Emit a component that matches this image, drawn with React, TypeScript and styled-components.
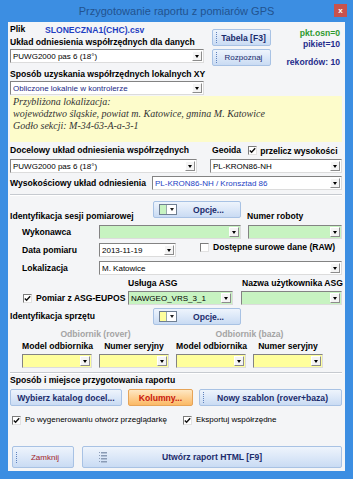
import React from 'react';
import styled, { createGlobalStyle } from 'styled-components';

const FONT = `"Liberation Sans", Arial, sans-serif`;

const GlobalStyle = createGlobalStyle`
  html, body {
    margin: 0;
    padding: 0;
  }
  body {
    width: 353px;
    height: 479px;
    overflow: hidden;
    background: #3c8ee2;
  }
  * {
    box-sizing: border-box;
  }
`;

const Window = styled.div`
  width: 353px;
  height: 479px;
  background: #3c8ee2;
  padding: 0 8px 8px;
  display: flex;
  flex-direction: column;
  font-family: ${FONT};
  font-size: 8px;
  color: #000;
`;

const TitleBar = styled.div`
  height: 22px;
  margin: 0 -8px;
  display: grid;
  grid-template-columns: 1fr auto 1fr;
  align-items: center;
`;

const Title = styled.div`
  grid-column: 2;
  font-size: 11px;
  color: #22538f;
  white-space: nowrap;
`;

const CloseButton = styled.div`
  grid-column: 3;
  justify-self: end;
  align-self: start;
  margin: 4px 6px 0 0;
  width: 13px;
  height: 13px;
  background: #c9524c;
  color: #fff;
  font-size: 8px;
  font-weight: bold;
  display: flex;
  align-items: center;
  justify-content: center;
`;

const Body = styled.div`
  flex: 1;
  background: #f4f5f7;
  padding: 0 3px 3px 2px;
  display: flex;
  flex-direction: column;
`;

const Label = styled.div<{ $h?: number; $color?: string }>`
  font-weight: bold;
  font-size: 8.6px;
  line-height: ${p => p.$h ?? 13}px;
  color: ${p => p.$color ?? '#000'};
  white-space: nowrap;
`;

/* ---------- combo box ---------- */

const ComboBox = styled.div<{ $bg?: string; $color?: string }>`
  height: 14px;
  display: flex;
  align-items: center;
  background: ${p => p.$bg ?? '#fff'};
  color: ${p => p.$color ?? '#000'};
  border: 1px solid;
  border-color: #838383 #dcdcdc #dcdcdc #838383;
  padding-left: 2px;
  font-size: 8px;
  min-width: 0;
`;

const ComboText = styled.span`
  flex: 1;
  overflow: hidden;
  white-space: nowrap;
`;

const DropArrow = styled.span`
  width: 10px;
  height: 10px;
  margin-right: 1px;
  background: #f4f4f4;
  border: 1px solid;
  border-color: #fff #8c8c8c #8c8c8c #fff;
  display: flex;
  align-items: center;
  justify-content: center;
  &::after {
    content: '';
    border-left: 2.5px solid transparent;
    border-right: 2.5px solid transparent;
    border-top: 3px solid #000;
  }
`;

const Combo = ({ text, bg, color }: { text?: string; bg?: string; color?: string }) => (
  <ComboBox $bg={bg} $color={color}>
    <ComboText>{text}</ComboText>
    <DropArrow />
  </ComboBox>
);

/* ---------- check box ---------- */

const CheckBox = styled.span`
  width: 9px;
  height: 9px;
  flex: none;
  background: #fff;
  border: 1px solid;
  border-color: #7c7c7c #e2e2e2 #e2e2e2 #7c7c7c;
  display: flex;
  align-items: center;
  justify-content: center;
`;

const Check = ({ checked }: { checked?: boolean }) => (
  <CheckBox>
    {checked && (
      <svg width="7" height="7" viewBox="0 0 7 7">
        <path d="M0.8 3.4 L2.6 5.3 L6.2 1.2" fill="none" stroke="#111" strokeWidth="1.4" />
      </svg>
    )}
  </CheckBox>
);

const CheckItem = styled.div<{ $gap?: number }>`
  display: flex;
  align-items: center;
  gap: ${p => p.$gap ?? 4}px;
  white-space: nowrap;
`;

const CheckText = styled.span<{ $bold?: boolean }>`
  font-size: ${p => (p.$bold ? 8.6 : 8)}px;
  font-weight: ${p => (p.$bold ? 'bold' : 'normal')};
`;

/* ---------- buttons ---------- */

const Button = styled.div<{ $orange?: boolean; $bold?: boolean; $color?: string; $h?: number }>`
  height: ${p => p.$h ?? 17}px;
  display: flex;
  align-items: center;
  border-radius: 2px;
  border: 1px solid ${p => (p.$orange ? '#e6a458' : '#a8c2e4')};
  background: ${p =>
    p.$orange
      ? 'linear-gradient(#fee8c4, #fdd093 50%, #fbb965)'
      : 'linear-gradient(#eef4fc, #dce8f8 50%, #c9dbf3)'};
  color: ${p => p.$color ?? '#1b2c6c'};
  font-weight: ${p => (p.$bold === false ? 'normal' : 'bold')};
  font-size: ${p => (p.$bold === false ? 8 : 8.6)}px;
  white-space: nowrap;
  overflow: hidden;
`;

const ButtonText = styled.span`
  flex: 1;
  text-align: center;
`;

const Grip = styled.span`
  width: 1px;
  height: 11px;
  margin-left: 3px;
  flex: none;
  background: repeating-linear-gradient(to bottom, #5f82bd 0 1px, transparent 1px 2px);
`;

const ColorCombo = styled.span`
  display: flex;
  margin-left: 5px;
  height: 11px;
  border: 1px solid #6f7f92;
  background: #fff;
`;

const ColorSwatch = styled.span<{ $color: string }>`
  width: 7px;
  background: ${p => p.$color};
  border-right: 1px solid #9aa;
`;

const ColorArrow = styled.span`
  width: 9px;
  display: flex;
  align-items: center;
  justify-content: center;
  &::after {
    content: '';
    border-left: 2.5px solid transparent;
    border-right: 2.5px solid transparent;
    border-top: 3px solid #222;
  }
`;

const OptionsButton = ({ color }: { color: string }) => (
  <Button>
    <ColorCombo>
      <ColorSwatch $color={color} />
      <ColorArrow />
    </ColorCombo>
    <ButtonText>Opcje...</ButtonText>
  </Button>
);

/* ---------- top area ---------- */

const TopGrid = styled.div`
  display: grid;
  grid-template-columns: 194px 59px 1fr;
  column-gap: 8px;
`;

const Stack = styled.div`
  display: flex;
  flex-direction: column;
`;

const FileRow = styled.div`
  margin-top: 1px;
  height: 13px;
  display: flex;
  align-items: center;
`;

const FileLabel = styled(Label)`
  width: 35px;
`;

const FileName = styled.span`
  font-weight: bold;
  font-size: 8.6px;
  color: #1f3fc2;
`;

const SecondLabel = styled(Label)`
  margin-top: 4px;
`;

const ButtonStack = styled.div`
  padding-top: 7px;
  display: flex;
  flex-direction: column;
  gap: 3px;
`;

const Stats = styled.div`
  display: flex;
  flex-direction: column;
  align-items: flex-end;
  padding: 6px 2px 0 0;
`;

const Stat = styled.div<{ $color: string; $gap?: number }>`
  font-weight: bold;
  font-size: 8.6px;
  line-height: 11px;
  color: ${p => p.$color};
  margin-top: ${p => p.$gap ?? 0}px;
`;

const InfoBox = styled.div`
  margin-top: 1px;
  height: 46px;
  background: #fdfccb;
  padding: 0 3px;
  font-family: "Liberation Serif", "Times New Roman", serif;
  font-style: italic;
  font-size: 10px;
  line-height: 12px;
  color: #333;
`;

/* ---------- target system ---------- */

const TargetGrid = styled.div`
  margin-top: 2px;
  display: grid;
  grid-template-columns: 187px 1fr;
  column-gap: 13px;
  row-gap: 2px;
`;

const GeoidHeader = styled.div`
  display: flex;
  align-items: center;
  padding-left: 2px;
  gap: 7px;
`;

const HeightRow = styled.div`
  margin-top: 3px;
  display: grid;
  grid-template-columns: 142px 1fr;
  align-items: center;
`;

const Separator = styled.div`
  margin-top: 4px;
  height: 2px;
  border-top: 1px solid #c6cad0;
  border-bottom: 1px solid #fff;
`;

/* ---------- session ---------- */

const SectionHeader = styled.div`
  height: 26px;
  display: grid;
  grid-template-columns: 143px 88px 1fr;
  align-items: end;
`;

const HeaderButtonCell = styled.div`
  align-self: start;
  margin-top: 5px;
`;

const SideLabel = styled(Label)`
  padding-left: 6px;
`;

const SessionGrid = styled.div`
  margin-top: 3px;
  padding-left: 12px;
  display: grid;
  grid-template-columns: 77px 1fr;
  row-gap: 4px;
  align-items: center;
`;

const PerformerCell = styled.div`
  display: grid;
  grid-template-columns: 142px 1fr;
  column-gap: 7px;
`;

const DateCell = styled.div`
  display: grid;
  grid-template-columns: 77px 1fr;
  column-gap: 24px;
  align-items: center;
`;

const RawCheck = styled(CheckItem)`
  align-self: start;
  margin-top: -1px;
`;

const AsgGrid = styled.div<{ $mt: number }>`
  margin-top: ${p => p.$mt}px;
  display: grid;
  grid-template-columns: 110px 105px 1fr;
  column-gap: 8px;
  align-items: center;
`;

const AsgUserLabel = styled(Label)`
  padding-left: 1px;
`;

const AsgCheck = styled(CheckItem)`
  padding-left: 13px;
`;

const EquipmentRow = styled.div`
  margin-top: 3px;
  display: grid;
  grid-template-columns: 143px 88px;
  align-items: center;
`;

const ReceiverGrid = styled.div`
  margin-top: 3px;
  padding-left: 12px;
  display: grid;
  grid-template-columns: repeat(4, 70px);
  column-gap: 7px;
`;

const GroupTitle = styled(Label)`
  grid-column: span 2;
  text-align: center;
`;

const ColumnTitle = styled(Label)`
  text-align: center;
`;

const ReceiverCombo = styled.div`
  margin-top: 2px;
`;

/* ---------- report ---------- */

const ReportButtons = styled.div`
  margin-top: 3px;
  display: grid;
  grid-template-columns: 112px 65px 1fr;
  column-gap: 6px;
`;

const OptionsRow = styled.div`
  margin-top: 8px;
  padding-left: 2px;
  display: grid;
  grid-template-columns: 171px 1fr;
  line-height: 12px;
`;

const BottomButtons = styled.div`
  margin-top: auto;
  padding-left: 2px;
  display: grid;
  grid-template-columns: 62px 1fr;
  column-gap: 8px;
`;

const CreateButton = styled(Button)`
  display: grid;
  grid-template-columns: 1fr auto 1fr;
`;

const CreateIcon = styled.svg`
  margin-left: 16px;
`;

const GREEN = '#c7f3c1';
const YELLOW = '#ffff9c';

export default function App() {
  return (
    <>
      <GlobalStyle />
      <Window>
        <TitleBar>
          <Title>Przygotowanie raportu z pomiarów GPS</Title>
          <CloseButton>x</CloseButton>
        </TitleBar>
        <Body>
          <TopGrid>
            <Stack>
              <FileRow>
                <FileLabel>Plik</FileLabel>
                <FileName>SLONECZNA1(CHC).csv</FileName>
              </FileRow>
              <Label>Układ odniesienia współrzędnych dla danych</Label>
              <Combo text="PUWG2000 pas 6 (18°)" />
              <SecondLabel $h={14}>Sposób uzyskania współrzędnych lokalnych XY</SecondLabel>
              <Combo text="Obliczone lokalnie w kontrolerze" color="#1c2a86" />
            </Stack>
            <ButtonStack>
              <Button>
                <Grip />
                <ButtonText>Tabela [F3]</ButtonText>
              </Button>
              <Button $bold={false}>
                <Grip />
                <ButtonText>Rozpoznaj</ButtonText>
              </Button>
            </ButtonStack>
            <Stats>
              <Stat $color="#2f9a2f">pkt.osn=0</Stat>
              <Stat $color="#1f2c8c">pikiet=10</Stat>
              <Stat $color="#1f2c8c" $gap={7}>rekordów: 10</Stat>
            </Stats>
          </TopGrid>

          <InfoBox>
            Przybliżona lokalizacja:
            <br />
            województwo śląskie, powiat m. Katowice, gmina M. Katowice
            <br />
            Godło sekcji: M-34-63-A-a-3-1
          </InfoBox>

          <TargetGrid>
            <Label>Docelowy układ odniesienia współrzędnych</Label>
            <GeoidHeader>
              <Label>Geoida</Label>
              <CheckItem $gap={3}>
                <Check checked />
                <CheckText $bold>przelicz wysokości</CheckText>
              </CheckItem>
            </GeoidHeader>
            <Combo text="PUWG2000 pas 6 (18°)" />
            <Combo text="PL-KRON86-NH" />
          </TargetGrid>

          <HeightRow>
            <Label>Wysokościowy układ odniesienia</Label>
            <Combo text="PL-KRON86-NH / Kronsztad 86" color="#2443c4" />
          </HeightRow>

          <Separator />

          <SectionHeader>
            <Label $h={12}>Identyfikacja sesji pomiarowej</Label>
            <HeaderButtonCell>
              <OptionsButton color={GREEN} />
            </HeaderButtonCell>
            <SideLabel $h={12}>Numer roboty</SideLabel>
          </SectionHeader>

          <SessionGrid>
            <Label $h={14}>Wykonawca</Label>
            <PerformerCell>
              <Combo bg={GREEN} />
              <Combo bg={GREEN} />
            </PerformerCell>
            <Label $h={14}>Data pomiaru</Label>
            <DateCell>
              <Combo text="2013-11-19" />
              <RawCheck>
                <Check />
                <CheckText $bold>Dostępne surowe dane (RAW)</CheckText>
              </RawCheck>
            </DateCell>
            <Label $h={14}>Lokalizacja</Label>
            <Combo text="M. Katowice" />
          </SessionGrid>

          <AsgGrid $mt={2}>
            <span />
            <Label $h={12}>Usługa ASG</Label>
            <AsgUserLabel $h={12}>Nazwa użytkownika ASG</AsgUserLabel>
          </AsgGrid>
          <AsgGrid $mt={2}>
            <AsgCheck>
              <Check checked />
              <CheckText $bold>Pomiar z ASG-EUPOS</CheckText>
            </AsgCheck>
            <Combo text="NAWGEO_VRS_3_1" bg={GREEN} />
            <Combo bg={GREEN} />
          </AsgGrid>

          <EquipmentRow>
            <Label>Identyfikacja sprzętu</Label>
            <OptionsButton color={YELLOW} />
          </EquipmentRow>

          <ReceiverGrid>
            <GroupTitle $h={12} $color="#a4a4a4">Odbiornik (rover)</GroupTitle>
            <GroupTitle $h={12} $color="#a4a4a4">Odbiornik (baza)</GroupTitle>
            <ColumnTitle $h={12}>Model odbiornika</ColumnTitle>
            <ColumnTitle $h={12}>Numer seryjny</ColumnTitle>
            <ColumnTitle $h={12}>Model odbiornika</ColumnTitle>
            <ColumnTitle $h={12}>Numer seryjny</ColumnTitle>
            {[0, 1, 2, 3].map(i => (
              <ReceiverCombo key={i}>
                <Combo bg={YELLOW} />
              </ReceiverCombo>
            ))}
          </ReceiverGrid>

          <Separator />

          <Label $h={12}>Sposób i miejsce przygotowania raportu</Label>

          <ReportButtons>
            <Button>
              <ButtonText>Wybierz katalog docel...</ButtonText>
            </Button>
            <Button $orange $color="#c8160c">
              <ButtonText>Kolumny...</ButtonText>
            </Button>
            <Button>
              <Grip />
              <ButtonText>Nowy szablon (rover+baza)</ButtonText>
            </Button>
          </ReportButtons>

          <OptionsRow>
            <CheckItem>
              <Check checked />
              <CheckText>Po wygenerowaniu otwórz przeglądarkę</CheckText>
            </CheckItem>
            <CheckItem>
              <Check checked />
              <CheckText>Eksportuj współrzędne</CheckText>
            </CheckItem>
          </OptionsRow>

          <BottomButtons>
            <Button $h={22} $bold={false} $color="#a3222a">
              <Grip />
              <ButtonText>Zamknij</ButtonText>
            </Button>
            <CreateButton $h={22}>
              <CreateIcon width="8" height="13" viewBox="0 0 8 13">
                <g fill="#8a9bb5">
                  <rect x="0" y="1" width="1" height="1" />
                  <rect x="0" y="4" width="1" height="1" />
                  <rect x="0" y="7" width="1" height="1" />
                  <rect x="0" y="10" width="1" height="1" />
                  <rect x="2" y="1" width="6" height="1.5" />
                  <rect x="2" y="4" width="6" height="1.5" />
                  <rect x="2" y="7" width="6" height="1.5" />
                  <rect x="2" y="10" width="6" height="1.5" />
                </g>
              </CreateIcon>
              <span>Utwórz raport HTML [F9]</span>
              <span />
            </CreateButton>
          </BottomButtons>
        </Body>
      </Window>
    </>
  );
}
